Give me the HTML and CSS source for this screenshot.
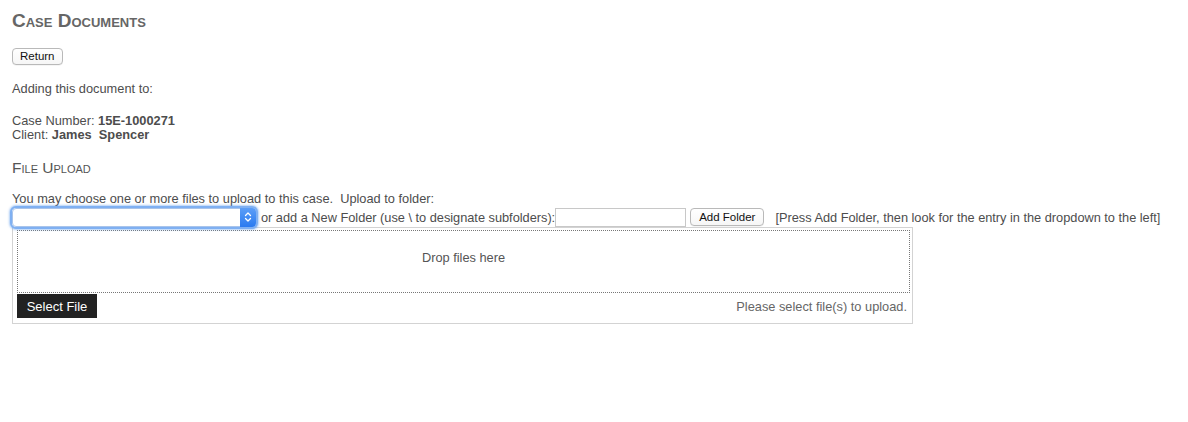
FILE: index.html
```html
<!DOCTYPE html>
<html>
<head>
<meta charset="utf-8">
<link rel="stylesheet" href="styles.css">
</head>
<body>
<div class="page">
  <h1 class="title">Case Documents</h1>
  <div class="return-row"><button class="mac-btn">Return</button></div>
  <p class="adding">Adding this document to:</p>
  <div class="case-info">
    <div>Case Number: <b>15E-1000271</b></div>
    <div>Client: <b>James&nbsp; Spencer</b></div>
  </div>
  <h2 class="section">File Upload</h2>
  <div class="choose">You may choose one or more files to upload to this case.&nbsp; Upload to folder:</div>
  <div class="folder-row">
    <div class="select-wrap">
      <select class="folder-select"><option></option></select>
      <span class="select-arrow"><svg width="8" height="12" viewBox="0 0 8 12"><path d="M1.5 4.5 L4 2 L6.5 4.5 M1.5 7.5 L4 10 L6.5 7.5" fill="none" stroke="#fff" stroke-width="1.3" stroke-linecap="round" stroke-linejoin="round"/></svg></span>
    </div>
    <span class="or-text">or add a New Folder (use \ to designate subfolders):</span>
    <input class="new-folder" type="text">
    <button class="mac-btn add-btn">Add Folder</button>
    <span class="hint">[Press Add Folder, then look for the entry in the dropdown to the left]</span>
  </div>
  <div class="uploader">
    <div class="dropzone">Drop files here</div>
    <div class="upload-foot">
      <button class="select-file">Select File</button>
      <span class="status">Please select file(s) to upload.</span>
    </div>
  </div>
</div>
</body>
</html>
```
FILE: styles.css
```css
html, body {
  margin: 0;
  padding: 0;
  background: #fff;
}
body {
  font-family: "Liberation Sans", Arial, Helvetica, sans-serif;
  font-size: 12.8px;
  color: #4d4d4d;
}
.page {
  padding: 10px 12px;
}
.title {
  margin: 0;
  font-size: 19px;
  line-height: 22px;
  font-weight: bold;
  font-variant: small-caps;
  color: #666;
}
.return-row {
  margin-top: 16px;
}
.mac-btn {
  font-family: "Liberation Sans", Arial, sans-serif;
  font-size: 11.5px;
  color: #111;
  background: linear-gradient(#fff, #f6f6f6);
  border: 1px solid #b9b9b9;
  border-radius: 4px;
  height: 17px;
  padding: 0 7px;
  line-height: 15px;
  box-shadow: 0 0.5px 0.5px rgba(0,0,0,0.08);
}
.adding {
  margin: 17px 0 0;
  line-height: 14px;
}
.case-info {
  margin-top: 18px;
  line-height: 14px;
}
.case-info b {
  color: #4d4d4d;
}
.section {
  margin: 17px 0 0;
  font-size: 15.5px;
  line-height: 17px;
  font-weight: normal;
  font-variant: small-caps;
  color: #555;
}
.choose {
  margin-top: 16px;
  line-height: 14px;
}
.folder-row {
  display: flex;
  align-items: center;
  height: 20px;
  margin-top: 1px;
  letter-spacing: -0.02px;
}
.select-wrap {
  position: relative;
  width: 244px;
  height: 19px;
  border-radius: 4px;
  box-shadow: 0 0 0 2px #7fb0f2, 0 0 2px 3px rgba(100,160,240,0.5);
}
.folder-select {
  appearance: none;
  -webkit-appearance: none;
  width: 100%;
  height: 19px;
  margin: 0;
  border: 1px solid #a9c4ea;
  border-radius: 4px;
  background: #fff;
  outline: none;
}
.select-arrow {
  position: absolute;
  right: 0;
  top: 0;
  width: 16px;
  height: 19px;
  background: linear-gradient(#5c9ef7, #2a7af0);
  border-radius: 0 4px 4px 0;
  display: flex;
  align-items: center;
  justify-content: center;
}
.or-text {
  margin-left: 5px;
}
.new-folder {
  width: 131px;
  height: 19px;
  box-sizing: border-box;
  border: 1px solid #c8c8c8;
  margin: 0;
  padding: 0 2px;
}
.add-btn {
  margin-left: 4px;
  height: 18px;
  padding: 0 8px;
}
.hint {
  margin-left: 11px;
}
.uploader {
  width: 893px;
  margin-top: 0;
  border: 1px solid #d3d3d3;
  padding: 2px 2px 5px 4px;
}
.dropzone {
  box-sizing: content-box;
  height: 41px;
  padding-top: 20px;
  border: 1px dotted #777;
  text-align: center;
  line-height: 14px;
  color: #555;
}
.upload-foot {
  display: flex;
  align-items: center;
  justify-content: space-between;
  margin-top: 1px;
}
.select-file {
  background: #222;
  color: #fff;
  border: none;
  border-radius: 0;
  font-family: "Liberation Sans", Arial, sans-serif;
  font-size: 13px;
  height: 24px;
  width: 80px;
  padding: 0;
}
.status {
  color: #666;
  margin-right: 3px;
}
```
